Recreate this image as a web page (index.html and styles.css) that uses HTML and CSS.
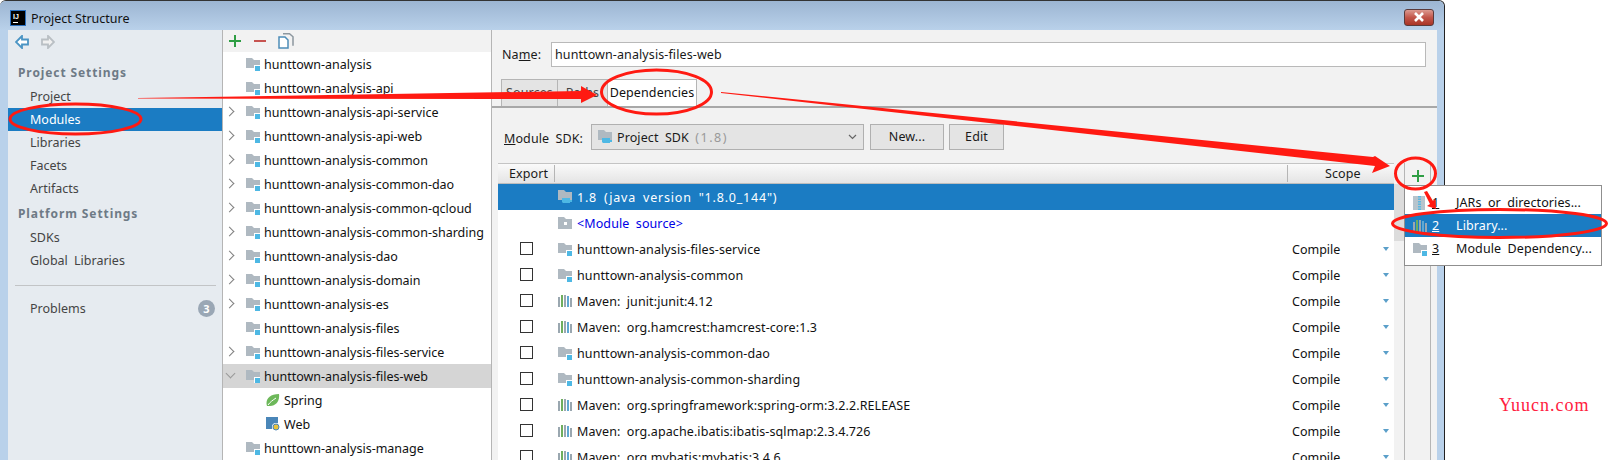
FILE: index.html
```html
<!DOCTYPE html>
<html lang="en">
<head>
    <meta charset="UTF-8">
    <title>Project Structure</title>
    <link rel="stylesheet" href="styles.css">
</head>
<body>
    <svg width="0" height="0" class="defs">
        <symbol id="module" viewBox="0 0 14 14">
            <path d="M0 1h6l2 2h6v8H0z" fill="#afb9c1"/>
            <rect x="8" y="8" width="6" height="6" fill="#fff"/>
            <rect x="9" y="9" width="5" height="5" fill="#4eb8e4"/>
        </symbol>
        <symbol id="sdk" viewBox="0 0 14 14">
            <path d="M0 0h6l2 2h6v8H0z" fill="#afb9c1"/>
            <path d="M4 8h8v2h2v2h-2v1H5l-1-1z" fill="#4eb8e4"/>
        </symbol>
        <symbol id="lib" viewBox="0 0 14 14">
            <rect x="0" y="3" width="2" height="10" fill="#9aa7b0"/>
            <rect x="3" y="1" width="2" height="12" fill="#6fae5e"/>
            <rect x="6" y="1" width="2" height="12" fill="#9aa7b0"/>
            <rect x="9" y="2" width="2" height="11" fill="#5fa8d3"/>
            <rect x="12" y="4" width="2" height="9" fill="#9aa7b0"/>
        </symbol>
    </svg>

    <div class="window">
        <div class="titlebar">
            <svg class="app-icon" width="16" height="16" viewBox="0 0 16 16">
                <rect x=".5" y=".5" width="15" height="15" fill="#000" stroke="#2a70c0"/>
                <text x="3" y="9" class="app-icon-text">IJ</text>
                <rect x="3" y="12" width="5" height="1" fill="#fff"/>
            </svg>
            <span class="title">Project Structure</span>
            <div class="close">
                <svg width="12" height="10" viewBox="0 0 12 10"><path d="M2 1l8 8M10 1l-8 8" stroke="#fff" stroke-width="2.600"/></svg>
            </div>
        </div>

        <div class="body">
            <aside class="sidebar">
                <div class="nav-arrows">
                    <svg width="14" height="14" viewBox="0 0 14 14"><path d="M7 1L1 7l6 6V9.500h6v-5H7z" fill="#fff" stroke="#4a94c4" stroke-width="1.800"/></svg>
                    <svg width="14" height="14" viewBox="0 0 14 14"><path d="M7 1l6 6-6 6V9.500H1v-5h6z" fill="#f0f0f0" stroke="#b9bfc4" stroke-width="1.800"/></svg>
                </div>
                <div class="side-head">Project Settings</div>
                <div class="side-item">Project</div>
                <div class="side-item active">Modules</div>
                <div class="side-item">Libraries</div>
                <div class="side-item">Facets</div>
                <div class="side-item">Artifacts</div>
                <div class="side-head second">Platform Settings</div>
                <div class="side-item">SDKs</div>
                <div class="side-item">Global Libraries</div>
                <div class="side-sep"></div>
                <div class="side-item problems">Problems <span class="badge">3</span></div>
            </aside>

            <section class="modules">
                <div class="mod-toolbar">
                    <svg width="14" height="14" viewBox="0 0 14 14"><path d="M7 1v12M1 7h12" stroke="#2f9e44" stroke-width="2"/></svg>
                    <svg width="14" height="14" viewBox="0 0 14 14"><path d="M1 7h12" stroke="#c75450" stroke-width="2"/></svg>
                    <svg width="16" height="16" viewBox="0 0 16 16"><path d="M5 .8h6.500l3.500 3v9" fill="none" stroke="#8c979f" stroke-width="1.500"/><path d="M1 4h6l3 3v8H1z" fill="#fff" stroke="#4d8db8" stroke-width="1.500"/></svg>
                </div>
                <ul class="tree">
                    <li><svg class="ico"><use href="#module"/></svg>hunttown-analysis</li>
                    <li><svg class="ico"><use href="#module"/></svg>hunttown-analysis-api</li>
                    <li class="closed"><svg class="ico"><use href="#module"/></svg>hunttown-analysis-api-service</li>
                    <li class="closed"><svg class="ico"><use href="#module"/></svg>hunttown-analysis-api-web</li>
                    <li class="closed"><svg class="ico"><use href="#module"/></svg>hunttown-analysis-common</li>
                    <li class="closed"><svg class="ico"><use href="#module"/></svg>hunttown-analysis-common-dao</li>
                    <li class="closed"><svg class="ico"><use href="#module"/></svg>hunttown-analysis-common-qcloud</li>
                    <li class="closed"><svg class="ico"><use href="#module"/></svg>hunttown-analysis-common-sharding</li>
                    <li class="closed"><svg class="ico"><use href="#module"/></svg>hunttown-analysis-dao</li>
                    <li class="closed"><svg class="ico"><use href="#module"/></svg>hunttown-analysis-domain</li>
                    <li class="closed"><svg class="ico"><use href="#module"/></svg>hunttown-analysis-es</li>
                    <li><svg class="ico"><use href="#module"/></svg>hunttown-analysis-files</li>
                    <li class="closed"><svg class="ico"><use href="#module"/></svg>hunttown-analysis-files-service</li>
                    <li class="opened"><svg class="ico"><use href="#module"/></svg>hunttown-analysis-files-web</li>
                    <li class="child">
                        <svg class="ico" viewBox="0 0 14 14"><path d="M1 13C-1 7 3 1 13 1c1 7-3 12-9 12z" fill="#6db85a"/><path d="M2 12c2-3 5-5 8-7" stroke="#fff" fill="none"/></svg>Spring
                    </li>
                    <li class="child">
                        <svg class="ico" viewBox="0 0 14 14"><rect y="0" width="12" height="12" fill="#4a86b8"/><circle cx="10" cy="10" r="4" fill="#fff"/><circle cx="10" cy="10" r="3" fill="#e8c23c" stroke="#4a86b8"/></svg>Web
                    </li>
                    <li><svg class="ico"><use href="#module"/></svg>hunttown-analysis-manage</li>
                </ul>
            </section>

            <section class="detail">
                <div class="name-row">
                    <label class="name-label">Na<u>m</u>e:</label>
                    <div class="name-input">hunttown-analysis-files-web</div>
                </div>
                <div class="tabs">
                    <div class="tab sources">Sources</div>
                    <div class="tab paths">Paths</div>
                    <div class="tab current">Dependencies</div>
                </div>
                <div class="sdk-row">
                    <label class="sdk-label"><u>M</u>odule SDK:</label>
                    <div class="combo">
                        <svg class="ico"><use href="#sdk"/></svg>
                        <span>Project SDK <span class="muted">(1.8)</span></span>
                        <svg class="combo-arrow" width="9" height="6" viewBox="0 0 9 6"><path d="M1 1l3.500 3.500L8 1" fill="none" stroke="#666" stroke-width="1.200"/></svg>
                    </div>
                    <div class="btn new">New...</div>
                    <div class="btn edit">Edit</div>
                </div>
                <div class="deps">
                    <div class="table">
                        <div class="thead">
                            <div class="th-export">Export</div>
                            <div class="th-main"></div>
                            <div class="th-scope">Scope</div>
                        </div>
                        <div class="row sel"><span class="cell-main wide"><svg class="ico"><use href="#sdk"/></svg>1.8 (java version "1.8.0_144")</span></div>
                        <div class="row"><span class="cell-main src">
                            <svg class="ico" viewBox="0 0 14 14"><path d="M0 1h6l2 2h6v10H0z" fill="#afb9c1"/><rect x="6" y="6" width="3" height="3" fill="#fff"/></svg>&lt;Module source&gt;</span></div>
                        <div class="row"><span class="check"></span><span class="cell-main"><svg class="ico"><use href="#module"/></svg>hunttown-analysis-files-service</span><span class="scope">Compile</span><span class="drop"></span></div>
                        <div class="row"><span class="check"></span><span class="cell-main"><svg class="ico"><use href="#module"/></svg>hunttown-analysis-common</span><span class="scope">Compile</span><span class="drop"></span></div>
                        <div class="row"><span class="check"></span><span class="cell-main"><svg class="ico"><use href="#lib"/></svg>Maven: junit:junit:4.12</span><span class="scope">Compile</span><span class="drop"></span></div>
                        <div class="row"><span class="check"></span><span class="cell-main"><svg class="ico"><use href="#lib"/></svg>Maven: org.hamcrest:hamcrest-core:1.3</span><span class="scope">Compile</span><span class="drop"></span></div>
                        <div class="row"><span class="check"></span><span class="cell-main"><svg class="ico"><use href="#module"/></svg>hunttown-analysis-common-dao</span><span class="scope">Compile</span><span class="drop"></span></div>
                        <div class="row"><span class="check"></span><span class="cell-main"><svg class="ico"><use href="#module"/></svg>hunttown-analysis-common-sharding</span><span class="scope">Compile</span><span class="drop"></span></div>
                        <div class="row"><span class="check"></span><span class="cell-main"><svg class="ico"><use href="#lib"/></svg>Maven: org.springframework:spring-orm:3.2.2.RELEASE</span><span class="scope">Compile</span><span class="drop"></span></div>
                        <div class="row"><span class="check"></span><span class="cell-main"><svg class="ico"><use href="#lib"/></svg>Maven: org.apache.ibatis:ibatis-sqlmap:2.3.4.726</span><span class="scope">Compile</span><span class="drop"></span></div>
                        <div class="row"><span class="check"></span><span class="cell-main"><svg class="ico"><use href="#lib"/></svg>Maven: org.mybatis:mybatis:3.4.6</span><span class="scope">Compile</span><span class="drop"></span></div>
                    </div>
                    <div class="side-gap"><div class="thumb"></div></div>
                    <div class="dep-tools">
                        <svg width="14" height="14" viewBox="0 0 14 14"><path d="M7 1v12M1 7h12" stroke="#2f9e44" stroke-width="2"/></svg>
                    </div>
                </div>
            </section>
        </div>
    </div>

    <div class="popup">
        <div class="pop-item"><svg class="ico" viewBox="0 0 14 14"><rect width="12" height="14" fill="#b7c4cc"/><path d="M6.500 0v14" stroke="#5db7e0" stroke-width="3" stroke-dasharray="1.500 1"/></svg><u>1</u><span class="pop-text">JARs or directories...</span></div>
        <div class="pop-item on"><svg class="ico"><use href="#lib"/></svg><u>2</u><span class="pop-text">Library...</span></div>
        <div class="pop-item"><svg class="ico"><use href="#module"/></svg><u>3</u><span class="pop-text">Module Dependency...</span></div>
    </div>

    <svg class="marks" width="1609" height="460" viewBox="0 0 1609 460">
        <g fill="none" stroke="#ff1a12" stroke-width="3">
            <ellipse cx="75.500" cy="119" rx="65.500" ry="15"/>
            <ellipse cx="656.500" cy="92" rx="55" ry="22"/>
            <ellipse cx="1415.500" cy="173.500" rx="20" ry="15.500"/>
            <ellipse cx="1499.500" cy="223.500" rx="107" ry="14"/>
        </g>
        <g fill="#ff1a12">
            <path d="M138 98L581 91V86L597 95 581 103V99L138 98.600z"/>
            <path d="M721 92L1373 157 1375 156 1390 166 1372 173 1375 166 721 93z"/>
            <path d="M1424 192l3-1 6 10 2-2 1 10-9-3 3-2z"/>
        </g>
    </svg>

    <div class="watermark">Yuucn.com</div>
</body>
</html>
```

FILE: styles.css
```css
* {
    box-sizing: border-box;
}

html, body {
    margin: 0;
    padding: 0;
    width: 1609px;
    height: 460px;
    overflow: hidden;
    background: #fff;
}

body {
    position: relative;
    font-family: "Noto Sans", "Liberation Sans", sans-serif;
    font-size: 12.5px;
    word-spacing: 3px;
    letter-spacing: .1px;
    color: #1a1a1a;
}

.defs {
    position: absolute;
}

.ico {
    width: 14px;
    height: 14px;
    flex: none;
}

.window {
    width: 1445px;
    height: 460px;
    display: flex;
    flex-direction: column;
    background: #b9d1ea;
    border-top: 1px solid #333;
    border-right: 1px solid #222;
    border-top-left-radius: 6px;
    border-top-right-radius: 6px;
}

.titlebar {
    height: 29px;
    flex: none;
    display: flex;
    align-items: center;
    padding: 5px 10px 0 10px;
    background: linear-gradient(#9cb5d2, #b9d1ea);
    border-top-left-radius: 6px;
    border-top-right-radius: 6px;
}

.app-icon {
    margin-right: 5px;
}

.app-icon-text {
    font-family: "Liberation Sans", sans-serif;
    font-size: 7px;
    font-weight: bold;
    letter-spacing: 0;
    fill: #fff;
}

.title {
    color: #111;
    font-size: 12.5px;
    word-spacing: 0;
    letter-spacing: 0;
}

.close {
    margin-left: auto;
    margin-top: -2px;
    width: 30px;
    height: 17px;
    display: flex;
    align-items: center;
    justify-content: center;
    border: 1px solid #5b3a3a;
    border-radius: 3px;
    background: linear-gradient(#dc9a90, #c2564a 50%, #a93426);
}

.body {
    flex: 1;
    display: flex;
    margin: 0 7px 0 8px;
    min-height: 0;
}

.sidebar {
    width: 215px;
    flex: none;
    background: #e6ebf0;
    border-right: 1px solid #b5b5b5;
    color: #444;
    letter-spacing: 0;
}

.nav-arrows {
    display: flex;
    gap: 12px;
    padding: 5px 0 0 7px;
    height: 31px;
}

.side-head {
    height: 23px;
    line-height: 21px;
    padding-left: 10px;
    font-weight: bold;
    font-size: 12px;
    color: #6e7a86;
    letter-spacing: .9px;
    word-spacing: 0;
    margin-top: 1px;
}

.side-head.second {
    margin-top: 2px;
    height: 24px;
    line-height: 23px;
}

.side-item {
    height: 23px;
    line-height: 23px;
    padding-left: 22px;
}

.side-item.active {
    background: #1b7cc3;
    color: #fff;
}

.side-sep {
    height: 1px;
    margin: 13px 6px 11px 7px;
    background: #c2c4c6;
}

.problems {
    display: flex;
    align-items: center;
    justify-content: space-between;
    padding-right: 7px;
}

.badge {
    width: 17px;
    height: 17px;
    border-radius: 50%;
    background: #9aa7b5;
    color: #fff;
    font-size: 11px;
    font-weight: bold;
    line-height: 17px;
    text-align: center;
}

.modules {
    width: 269px;
    flex: none;
    background: #fff;
    border-right: 1px solid #b5b5b5;
}

.mod-toolbar {
    height: 22px;
    background: #f2f2f2;
    display: flex;
    align-items: center;
    gap: 11px;
    padding-left: 5px;
}

.tree {
    list-style: none;
    margin: 0;
    padding: 0;
}

.tree li {
    position: relative;
    height: 24px;
    display: flex;
    align-items: center;
    padding-left: 23px;
    gap: 4px;
    color: #111;
    white-space: nowrap;
    letter-spacing: 0;
}

.tree li.closed::before,
.tree li.opened::before {
    content: "";
    position: absolute;
    left: 3px;
    top: 8px;
    width: 6px;
    height: 6px;
    border-top: 1.8px solid #808080;
    border-right: 1.8px solid #808080;
    transform: rotate(45deg);
}

.tree li.opened {
    background: #d5d5d5;
}

.tree li.opened::before {
    left: 4px;
    top: 6px;
    border-color: #999;
    transform: rotate(135deg);
}

.tree li.child {
    padding-left: 43px;
    gap: 4px;
}

.detail {
    flex: 1;
    min-width: 0;
    background: #f2f2f2;
    padding-top: 12px;
}

.name-row {
    display: flex;
    align-items: center;
    height: 25px;
    padding: 0 11px 0 10px;
}

.name-label {
    width: 49px;
    flex: none;
}

.name-input {
    flex: 1;
    height: 25px;
    line-height: 23px;
    padding-left: 3px;
    background: #fff;
    border: 1px solid #b9b9b9;
}

.tabs {
    display: flex;
    height: 29px;
    margin-top: 12px;
    padding-left: 9px;
    border-bottom: 2px solid #a8a8a8;
}

.tab {
    height: 27px;
    line-height: 25px;
    text-align: center;
    background: #e4e4e4;
    border: 1px solid #b5b5b5;
    border-bottom: 0;
    margin-right: -1px;
    color: #444;
}

.tab.sources {
    width: 57px;
}

.tab.paths {
    width: 51px;
}

.tab.current {
    width: 90px;
    background: #fff;
    color: #111;
}

.sdk-row {
    display: flex;
    align-items: center;
    height: 26px;
    margin-top: 16px;
    padding-left: 12px;
}

.sdk-label {
    width: 87px;
    flex: none;
    padding-top: 3px;
}

.combo {
    width: 273px;
    height: 26px;
    display: flex;
    align-items: center;
    gap: 5px;
    padding: 0 6px;
    background: #e4e4e4;
    border: 1px solid #b0b0b0;
}

.muted {
    color: #999;
    letter-spacing: 1.500px;
}

.combo-arrow {
    margin-left: auto;
}

.btn {
    height: 26px;
    line-height: 24px;
    text-align: center;
    background: #e4e4e4;
    border: 1px solid #b0b0b0;
    margin-top: -1px;
}

.btn.new {
    width: 74px;
    margin-left: 6px;
}

.btn.edit {
    width: 55px;
    margin-left: 5px;
}

.deps {
    display: flex;
    margin-top: 13px;
    padding-left: 6px;
    height: 320px;
}

.table {
    width: 896px;
    flex: none;
    background: #fff;
}

.thead {
    height: 21px;
    display: flex;
    align-items: center;
    background: linear-gradient(#fafafa, #e4e4e4);
    border-top: 1px solid #c4c4c4;
    border-bottom: 1px solid #bdbdbd;
}

.th-export {
    width: 57px;
    height: 17px;
    line-height: 17px;
    padding-left: 11px;
    border-right: 1px solid #b5b5b5;
}

.th-main {
    flex: 1;
}

.th-scope {
    width: 107px;
    height: 17px;
    line-height: 17px;
    text-align: left;
    padding-left: 37px;
    border-left: 1px solid #b5b5b5;
}

.row {
    position: relative;
    height: 26px;
    display: flex;
    align-items: center;
    padding-left: 60px;
    white-space: nowrap;
    color: #111;
}

.row.sel {
    background: #1b7cc3;
    color: #fff;
}

.cell-main {
    display: flex;
    align-items: center;
    gap: 5px;
    flex: 1;
}

.cell-main.wide {
    letter-spacing: .8px;
}

.src {
    color: #0000e6;
}

.check {
    position: absolute;
    left: 22px;
    top: 6px;
    width: 13px;
    height: 13px;
    border: 1px solid #333;
    background: #fff;
}

.scope {
    width: 100px;
    letter-spacing: 0;
}

.drop {
    width: 0;
    height: 0;
    margin-right: 5px;
    margin-left: -9px;
    border-left: 3.500px solid transparent;
    border-right: 3.500px solid transparent;
    border-top: 4px solid #5a9fc9;
}

.side-gap {
    width: 10px;
    flex: none;
    padding-top: 21px;
}

.thumb {
    height: 57px;
    background: #dcdcdc;
}

.dep-tools {
    width: 27px;
    flex: none;
    display: flex;
    justify-content: center;
    align-items: flex-start;
    padding-top: 6px;
    border-left: 1px solid #b5b5b5;
    border-right: 1px solid #b5b5b5;
}

.popup {
    position: absolute;
    left: 1404px;
    top: 185px;
    width: 198px;
    height: 81px;
    background: #fff;
    border: 1px solid #8f8f8f;
    padding-top: 5px;
    color: #111;
}

.pop-item {
    height: 23px;
    display: flex;
    align-items: center;
    padding-left: 8px;
}

.pop-item u {
    margin-left: 5px;
    width: 24px;
}

.pop-item.on {
    background: #1b7cc3;
    color: #fff;
}

.marks {
    position: absolute;
    left: 0;
    top: 0;
    pointer-events: none;
}

.watermark {
    position: absolute;
    left: 1499px;
    top: 395px;
    font-family: "Liberation Serif", serif;
    font-size: 18px;
    letter-spacing: 1px;
    line-height: 21px;
    color: #ff2040;
}
```
